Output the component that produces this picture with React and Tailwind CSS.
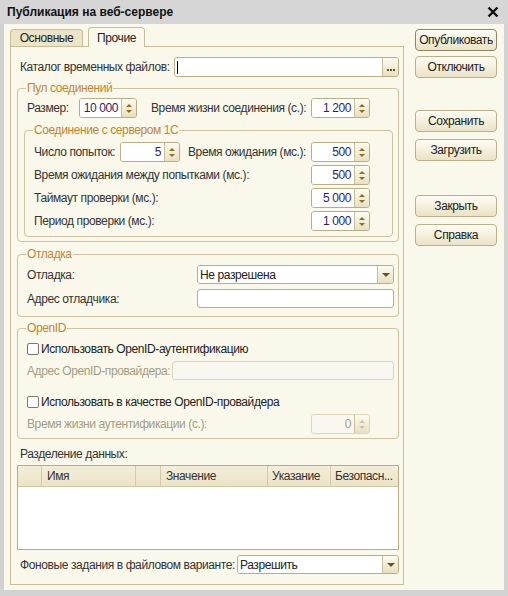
import React from "react";

const FONT = { fontFamily: '"Liberation Sans", Arial, sans-serif' };

function UpDown({ disabled }) {
  const c = disabled ? "border-b-[#c9c2ac]" : "border-b-[#8b6d1e]";
  const c2 = disabled ? "border-t-[#c9c2ac]" : "border-t-[#8b6d1e]";
  return (
    <div className="w-[15px] flex flex-col items-center justify-center gap-[3px] border-l border-[#c9bf9a] bg-gradient-to-b from-[#fdfbf1] to-[#e8e0c1]">
      <div className={`w-0 h-0 border-x-[3px] border-x-transparent border-b-[3px] ${c}`} />
      <div className={`w-0 h-0 border-x-[3px] border-x-transparent border-t-[3px] ${c2}`} />
    </div>
  );
}

function Spinner({ value, w = "w-[59px]", disabled, className = "" }) {
  return (
    <div
      className={`flex h-[20px] ${w} shrink-0 rounded-[3px] border overflow-hidden ${
        disabled ? "border-[#dcd5bd]" : "border-[#b9ad84]"
      } ${className}`}
    >
      <div
        className={`flex-1 flex items-center justify-end pr-[3px] whitespace-nowrap ${
          disabled ? "bg-[#f9f7ef] text-[#a49c86]" : "bg-white text-[#2d1e63]"
        }`}
      >
        {value}
      </div>
      <UpDown disabled={disabled} />
    </div>
  );
}

function Dropdown({ value, className = "" }) {
  return (
    <div className={`flex h-[19px] rounded-[3px] border border-[#b9ad84] overflow-hidden ${className}`}>
      <div className="flex-1 flex items-center pl-[2px] bg-white text-[#222]">{value}</div>
      <div className="w-[16px] flex items-center justify-center border-l border-[#c9bf9a] bg-gradient-to-b from-[#fdfbf1] to-[#e8e0c1]">
        <div className="w-0 h-0 border-x-[4px] border-x-transparent border-t-[4px] border-t-[#6b5416]" />
      </div>
    </div>
  );
}

function Field({ disabled, className = "" }) {
  return (
    <div
      className={`h-[19px] rounded-[3px] border ${
        disabled ? "border-[#dcd5bd] bg-[#f9f7ef]" : "border-[#b9ad84] bg-white"
      } ${className}`}
    />
  );
}

function Group({ title, className = "", children }) {
  return (
    <fieldset className={`border border-[#cdc3a0] rounded-[4px] ${className}`}>
      <legend className="ml-[8px] px-[1px] leading-[14px] text-[#c08634]">{title}</legend>
      {children}
    </fieldset>
  );
}

function Check({ label }) {
  return (
    <div className="flex items-center h-[17px] pl-[9px]">
      <div className="w-[12px] h-[12px] rounded-[2px] border border-[#7f786a] bg-white" />
      <span className="ml-[2px] text-[#222]">{label}</span>
    </div>
  );
}

function Btn({ children, strong, className = "" }) {
  return (
    <div
      className={`h-[22px] w-[82px] flex items-center justify-center rounded-[4px] border bg-gradient-to-b from-[#fefcf4] to-[#ebe3c6] text-[#222] ${
        strong ? "border-[#8f8462]" : "border-[#bcb08a]"
      } ${className}`}
    >
      {children}
    </div>
  );
}

export default function App() {
  return (
    <div
      className="w-[508px] h-[596px] bg-[#d2d2d2] flex flex-col text-[12px] leading-[14px] tracking-[-0.4px] whitespace-nowrap text-[#333]"
      style={FONT}
    >
      {/* title bar */}
      <div className="h-[24px] flex items-center pl-[7px] pr-[9px] bg-[#d6d6d6]">
        <span className="font-bold text-[#111] text-[12px] tracking-normal">Публикация на веб-сервере</span>
        <svg className="ml-auto" width="12" height="12" viewBox="0 0 12 12">
          <path d="M1.5 1.5 L10.5 10.5 M10.5 1.5 L1.5 10.5" stroke="#111" strokeWidth="2.4" />
        </svg>
      </div>

      {/* body */}
      <div className="mx-[4px] h-[566px] bg-[#faf8ea] flex pl-[6px] pt-[3px]">
        {/* left: tabs */}
        <div className="w-[394px] flex flex-col">
          <div className="h-[19px] flex items-end">
            <div className="h-[17px] w-[73px] flex items-center justify-center rounded-t-[4px] border border-b-0 border-[#c8bd97] bg-[#ebe4c7] text-[#222]">
              Основные
            </div>
            <div className="relative z-10 -mb-px ml-[5px] h-[20px] w-[57px] flex items-center justify-center rounded-t-[4px] border border-b-0 border-[#c8bd97] bg-[#faf8ea] text-[#222]">
              Прочие
            </div>
          </div>

          <div className="border border-[#c8bd97] pl-[6px] pr-[4px] pt-[10px] pb-[10px]">
            {/* temp dir */}
            <div className="flex items-center h-[20px] pl-[3px]">
              <span className="w-[154px] shrink-0">Каталог временных файлов:</span>
              <div className="flex-1 flex h-[20px] rounded-[3px] border border-[#b9ad84] overflow-hidden">
                <div className="flex-1 bg-white flex items-center pl-[2px]">
                  <div className="w-px h-[13px] bg-black" />
                </div>
                <div className="w-[16px] flex items-end justify-center pb-[5px] gap-[1px] border-l border-[#c9bf9a] bg-gradient-to-b from-[#fdfbf1] to-[#e8e0c1]">
                  <div className="w-[2px] h-[2px] bg-[#6b5416]" />
                  <div className="w-[2px] h-[2px] bg-[#6b5416]" />
                  <div className="w-[2px] h-[2px] bg-[#6b5416]" />
                </div>
              </div>
            </div>

            {/* pool */}
            <Group title="Пул соединений" className="mt-[4px] pb-[4px]">
              <div className="flex items-center h-[20px] mt-[3px] pl-[9px] pr-[28px]">
                <span className="w-[52px] shrink-0">Размер:</span>
                <Spinner value="10 000" w="w-[58px]" />
                <span className="ml-[14px]">Время жизни соединения (с.):</span>
                <Spinner value="1 200" className="ml-auto" />
              </div>

              <Group title="Соединение с сервером 1С" className="mt-[5px] ml-[6px] mr-[5px] pb-[5px]">
                <div className="flex flex-col gap-[3px] mt-[5px] pl-[9px] pr-[22px]">
                  <div className="flex items-center h-[20px]">
                    <span className="w-[86px] shrink-0">Число попыток:</span>
                    <Spinner value="5" w="w-[60px]" />
                    <span className="ml-[8px]">Время ожидания (мс.):</span>
                    <Spinner value="500" className="ml-auto" />
                  </div>
                  <div className="flex items-center h-[20px]">
                    <span>Время ожидания между попытками (мс.):</span>
                    <Spinner value="500" className="ml-auto" />
                  </div>
                  <div className="flex items-center h-[20px]">
                    <span>Таймаут проверки (мс.):</span>
                    <Spinner value="5 000" className="ml-auto" />
                  </div>
                  <div className="flex items-center h-[20px]">
                    <span>Период проверки (мс.):</span>
                    <Spinner value="1 000" className="ml-auto" />
                  </div>
                </div>
              </Group>
            </Group>

            {/* debug */}
            <Group title="Отладка" className="mt-[5px] pb-[8px]">
              <div className="flex flex-col gap-[5px] mt-[4px] pl-[9px] pr-[4px]">
                <div className="flex items-center h-[19px]">
                  <span className="w-[170px] shrink-0">Отладка:</span>
                  <Dropdown value="Не разрешена" className="flex-1" />
                </div>
                <div className="flex items-center h-[19px]">
                  <span className="w-[170px] shrink-0">Адрес отладчика:</span>
                  <Field className="flex-1" />
                </div>
              </div>
            </Group>

            {/* OpenID */}
            <Group title="OpenID" className="mt-[4px] pb-[4px]">
              <div className="mt-[5px]">
                <Check label="Использовать OpenID-аутентификацию" />
              </div>
              <div className="flex items-center h-[19px] mt-[4px] pl-[9px] pr-[4px]">
                <span className="w-[145px] shrink-0 text-[#a49c86]">Адрес OpenID-провайдера:</span>
                <Field disabled className="flex-1" />
              </div>
              <div className="mt-[13px]">
                <Check label="Использовать в качестве OpenID-провайдера" />
              </div>
              <div className="flex items-center h-[20px] mt-[4px] pl-[9px] pr-[28px]">
                <span className="text-[#a49c86]">Время жизни аутентификации (с.):</span>
                <Spinner value="0" disabled className="ml-auto" />
              </div>
            </Group>

            {/* data separation */}
            <div className="mt-[8px] pl-[3px] h-[14px]">Разделение данных:</div>
            <div className="mt-[4px] h-[85px] border border-[#b9ad84] bg-white flex flex-col">
              <div className="h-[21px] grid grid-cols-[24px_94px_25px_107px_63px_1fr] border-b border-[#d3c9a6] bg-gradient-to-b from-[#f3eed9] to-[#ebe4c8] text-[#333]">
                <div className="border-r border-[#d3c9a6]" />
                <div className="border-r border-[#d3c9a6] flex items-center pl-[5px]">Имя</div>
                <div className="border-r border-[#d3c9a6]" />
                <div className="border-r border-[#d3c9a6] flex items-center pl-[5px]">Значение</div>
                <div className="border-r border-[#d3c9a6] flex items-center pl-[4px]">Указание</div>
                <div className="flex items-center pl-[4px] overflow-hidden">Безопасн...</div>
              </div>
            </div>

            {/* background jobs */}
            <div className="flex items-center h-[19px] mt-[5px] pl-[3px]">
              <span className="w-[217px] shrink-0">Фоновые задания в файловом варианте:</span>
              <Dropdown value="Разрешить" className="flex-1" />
            </div>
          </div>
        </div>

        {/* right: buttons */}
        <div className="ml-[11px] pt-[2px] flex flex-col">
          <Btn strong>Опубликовать</Btn>
          <Btn className="mt-[5px]">Отключить</Btn>
          <Btn className="mt-[32px]">Сохранить</Btn>
          <Btn className="mt-[7px]">Загрузить</Btn>
          <Btn className="mt-[34px]">Закрыть</Btn>
          <Btn className="mt-[7px]">Справка</Btn>
        </div>
      </div>
    </div>
  );
}
